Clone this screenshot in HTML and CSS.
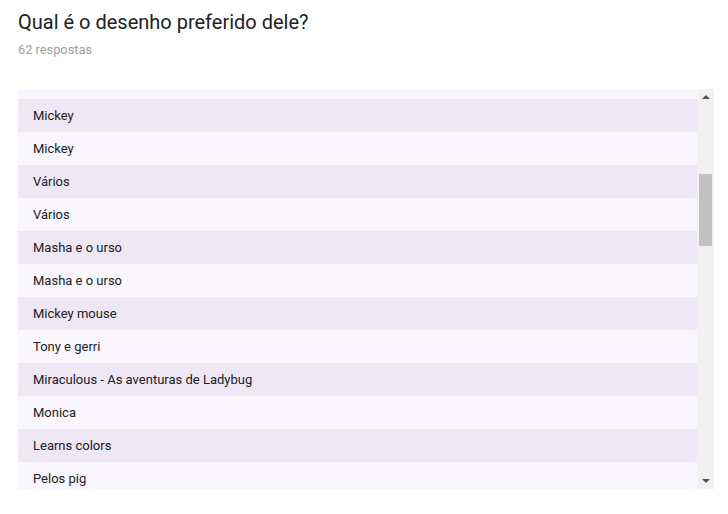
FILE: index.html
```html
<!DOCTYPE html>
<html lang="pt">
<head>
    <meta charset="UTF-8">
    <meta name="viewport" content="width=device-width, initial-scale=1.0">
    <title>Qual é o desenho preferido dele?</title>
    <link rel="stylesheet" href="styles.css">
</head>
<body>
    <div class="question">
        <h2 class="question-title">Qual é o desenho preferido dele?</h2>
        <p class="answer-count">62 respostas</p>

        <div class="answers-box">
            <div class="answers">
                <div class="answer">Mickey</div>
                <div class="answer">Mickey</div>
                <div class="answer">Vários</div>
                <div class="answer">Vários</div>
                <div class="answer">Masha e o urso</div>
                <div class="answer">Masha e o urso</div>
                <div class="answer">Mickey mouse</div>
                <div class="answer">Tony e gerri</div>
                <div class="answer">Miraculous - As aventuras de Ladybug</div>
                <div class="answer">Monica</div>
                <div class="answer">Learns colors</div>
                <div class="answer">Pelos pig</div>
            </div>
            <div class="scrollbar">
                <span class="arrow arrow-up"></span>
                <div class="track">
                    <div class="thumb"></div>
                </div>
                <span class="arrow arrow-down"></span>
            </div>
        </div>
    </div>
</body>
</html>
```

FILE: styles.css
```css
body {
    font-family: Roboto, Arial, sans-serif;
    margin: 0;
    padding: 0 14px 0 18px;
    background-color: #fff;
    color: #202124;
}
.question-title {
    font-size: 20px;
    font-weight: 400;
    line-height: 24px;
    margin: 10px 0 0;
}
.answer-count {
    font-size: 12.8px;
    color: #9e9e9e;
    margin: 8px 0 0;
    line-height: 16px;
}
.answers-box {
    display: flex;
    margin-top: 31px;
    height: 400px;
    background: #f9f7fd;
}
.answers {
    flex: 1;
    overflow: hidden;
    padding-top: 10px;
}
.answer {
    height: 33px;
    line-height: 33px;
    padding-left: 15px;
    font-size: 13px;
    color: #212121;
}
.answer:nth-child(odd) {
    background: #ede7f6;
}
.scrollbar {
    width: 17px;
    background: #f1f1f1;
    display: flex;
    flex-direction: column;
    align-items: center;
}
.arrow {
    width: 0;
    height: 0;
    border-left: 4px solid transparent;
    border-right: 4px solid transparent;
}
.arrow-up {
    border-bottom: 4px solid #505050;
    margin: 6px 0 7px;
}
.arrow-down {
    border-top: 4px solid #505050;
    margin: 7px 0 6px;
}
.track {
    flex: 1;
    width: 100%;
}
.thumb {
    margin: 68px 2px 0;
    height: 72px;
    background: #c1c1c1;
}
```
